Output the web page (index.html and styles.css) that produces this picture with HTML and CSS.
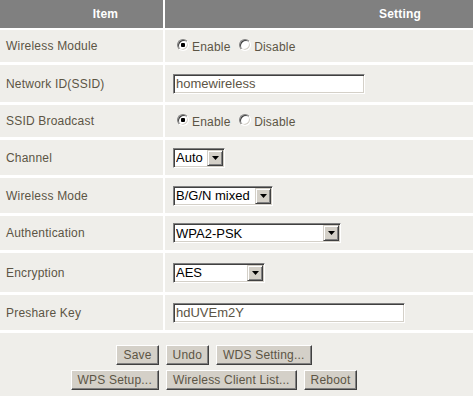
FILE: index.html
```html
<!DOCTYPE html>
<html lang="en">
<head>
    <meta charset="UTF-8">
    <title>Wireless Settings</title>
    <link rel="stylesheet" href="styles.css">
</head>
<body>
    <form id="wirelessForm">
        <table class="settings">
            <thead>
                <tr>
                    <th class="col-item">Item</th>
                    <th class="col-setting">Setting</th>
                </tr>
            </thead>
            <tbody>
                <tr class="h35">
                    <td class="label">Wireless Module</td>
                    <td class="field">
                        <label class="choice"><input type="radio" name="module" class="radio" checked>Enable</label>
                        <label class="choice"><input type="radio" name="module" class="radio">Disable</label>
                    </td>
                </tr>
                <tr class="h40">
                    <td class="label">Network ID(SSID)</td>
                    <td class="field">
                        <input type="text" class="text-input ssid-input" value="homewireless">
                    </td>
                </tr>
                <tr class="h35">
                    <td class="label">SSID Broadcast</td>
                    <td class="field">
                        <label class="choice"><input type="radio" name="broadcast" class="radio" checked>Enable</label>
                        <label class="choice"><input type="radio" name="broadcast" class="radio">Disable</label>
                    </td>
                </tr>
                <tr class="h38">
                    <td class="label">Channel</td>
                    <td class="field">
                        <div class="combo combo-channel">
                            <select class="combo-select">
                                <option>Auto</option>
                                <option>1</option>
                                <option>6</option>
                                <option>11</option>
                            </select>
                            <span class="combo-btn"><svg width="7" height="4" viewBox="0 0 7 4"><path d="M0 0h7L3.5 4z" fill="#000"/></svg></span>
                        </div>
                    </td>
                </tr>
                <tr class="h38">
                    <td class="label">Wireless Mode</td>
                    <td class="field">
                        <div class="combo combo-mode">
                            <select class="combo-select">
                                <option>B/G/N mixed</option>
                                <option>B/G mixed</option>
                                <option>N only</option>
                            </select>
                            <span class="combo-btn"><svg width="7" height="4" viewBox="0 0 7 4"><path d="M0 0h7L3.5 4z" fill="#000"/></svg></span>
                        </div>
                    </td>
                </tr>
                <tr class="h37">
                    <td class="label">Authentication</td>
                    <td class="field">
                        <div class="combo combo-auth">
                            <select class="combo-select">
                                <option>WPA2-PSK</option>
                                <option>WPA-PSK</option>
                                <option>Open</option>
                            </select>
                            <span class="combo-btn"><svg width="7" height="4" viewBox="0 0 7 4"><path d="M0 0h7L3.5 4z" fill="#000"/></svg></span>
                        </div>
                    </td>
                </tr>
                <tr class="h42">
                    <td class="label">Encryption</td>
                    <td class="field">
                        <div class="combo combo-enc">
                            <select class="combo-select">
                                <option>AES</option>
                                <option>TKIP</option>
                            </select>
                            <span class="combo-btn"><svg width="7" height="4" viewBox="0 0 7 4"><path d="M0 0h7L3.5 4z" fill="#000"/></svg></span>
                        </div>
                    </td>
                </tr>
                <tr class="h38">
                    <td class="label">Preshare Key</td>
                    <td class="field">
                        <input type="text" class="text-input key-input" value="hdUVEm2Y">
                    </td>
                </tr>
                <tr>
                    <td colspan="2" class="actions">
                        <div class="btn-row">
                            <button type="submit" class="btn">Save</button>
                            <button type="reset" class="btn">Undo</button>
                            <button type="button" class="btn">WDS Setting...</button>
                        </div>
                        <div class="btn-row">
                            <button type="button" class="btn">WPS Setup...</button>
                            <button type="button" class="btn">Wireless Client List...</button>
                            <button type="button" class="btn">Reboot</button>
                        </div>
                    </td>
                </tr>
            </tbody>
        </table>
    </form>
</body>
</html>
```

FILE: styles.css
```css
body {
    margin: 0;
    background: #fff;
    font-family: "Liberation Sans", Arial, sans-serif;
    font-size: 12px;
    letter-spacing: 0.2px;
    color: #5c5545;
}

form {
    margin: 0;
}

.settings {
    width: 473px;
    border-collapse: separate;
    border-spacing: 0;
    table-layout: fixed;
}

.settings th,
.settings td {
    box-sizing: border-box;
    padding: 0;
    vertical-align: middle;
}

.settings th {
    height: 30px;
    background: #808080;
    color: #fff;
    font-weight: bold;
    border-bottom: 2px solid #fff;
}

.col-item {
    width: 165px;
    border-right: 2px solid #fff;
    padding-left: 48px !important;
}

.col-setting {
    padding-left: 162px !important;
}

.settings td {
    background: #efeeea;
    border-bottom: 3px solid #fff;
}

.label {
    padding-left: 6px !important;
    border-right: 2px solid #fff;
}

.field {
    padding-left: 8px !important;
}

.h35 { height: 35px; }
.h37 { height: 37px; }
.h38 { height: 38px; }
.h40 { height: 40px; }
.h42 { height: 42px; }

/* radios */
.choice {
    display: inline-flex;
    align-items: center;
    margin: 2px 1px 0 0;
}

.radio {
    appearance: none;
    -webkit-appearance: none;
    width: 12px;
    height: 12px;
    margin: -5px 3px 0 4px;
    box-sizing: border-box;
    border-radius: 50%;
    border: 1px solid;
    border-color: #808080 #fff #fff #808080;
    box-shadow: inset 1px 1px #404040, inset -1px -1px #d4d0c8;
    background: #fff;
}

.radio:checked {
    background: radial-gradient(circle, #000 0 2px, #fff 2.5px);
}

/* text fields */
.text-input {
    box-sizing: border-box;
    height: 20px;
    margin: 0;
    padding: 0 2px;
    border: 1px solid;
    border-color: #808080 #fff #fff #808080;
    box-shadow: inset 1px 1px #404040, inset -1px -1px #d4d0c8;
    background: #fff;
    font-family: inherit;
    font-size: 13px;
    color: #5c5545;
    outline: none;
}

.ssid-input { width: 192px; }
.key-input { width: 232px; }

/* drop-downs */
.combo {
    display: inline-flex;
    box-sizing: border-box;
    height: 20px;
    padding: 1px;
    border: 1px solid;
    border-color: #808080 #fff #fff #808080;
    box-shadow: inset 1px 1px #404040, inset -1px -1px #d4d0c8;
    background: #fff;
    vertical-align: middle;
}

.combo-channel { width: 52px; }
.combo-mode { width: 100px; }
.combo-auth { width: 168px; }
.combo-enc { width: 92px; }

.combo-select {
    appearance: none;
    -webkit-appearance: none;
    flex: 1;
    min-width: 0;
    height: 16px;
    margin: 0;
    padding: 0 0 0 1px;
    border: 0;
    background: transparent;
    font-family: inherit;
    font-size: 13px;
    letter-spacing: 0;
    color: #000;
    outline: none;
}

.combo-btn {
    display: flex;
    align-items: center;
    justify-content: center;
    box-sizing: border-box;
    width: 16px;
    height: 16px;
    background: #d4d0c8;
    border: 1px solid;
    border-color: #d4d0c8 #404040 #404040 #d4d0c8;
    box-shadow: inset 1px 1px #fff, inset -1px -1px #808080;
}

/* buttons */
.actions {
    height: 63px;
    padding: 12px 45px 6px 0 !important;
    border-bottom: 0 !important;
}

.btn-row {
    display: flex;
    justify-content: center;
    gap: 7px;
}

.btn-row + .btn-row {
    margin-top: 5px;
}

.btn {
    height: 20px;
    padding: 0 6px;
    border: 1px solid;
    border-color: #fff #404040 #404040 #fff;
    box-shadow: inset -1px -1px #808080;
    background: #d4d0c8;
    font-family: inherit;
    font-size: 12px;
    letter-spacing: 0.2px;
    color: #5c5545;
    cursor: pointer;
}
```
